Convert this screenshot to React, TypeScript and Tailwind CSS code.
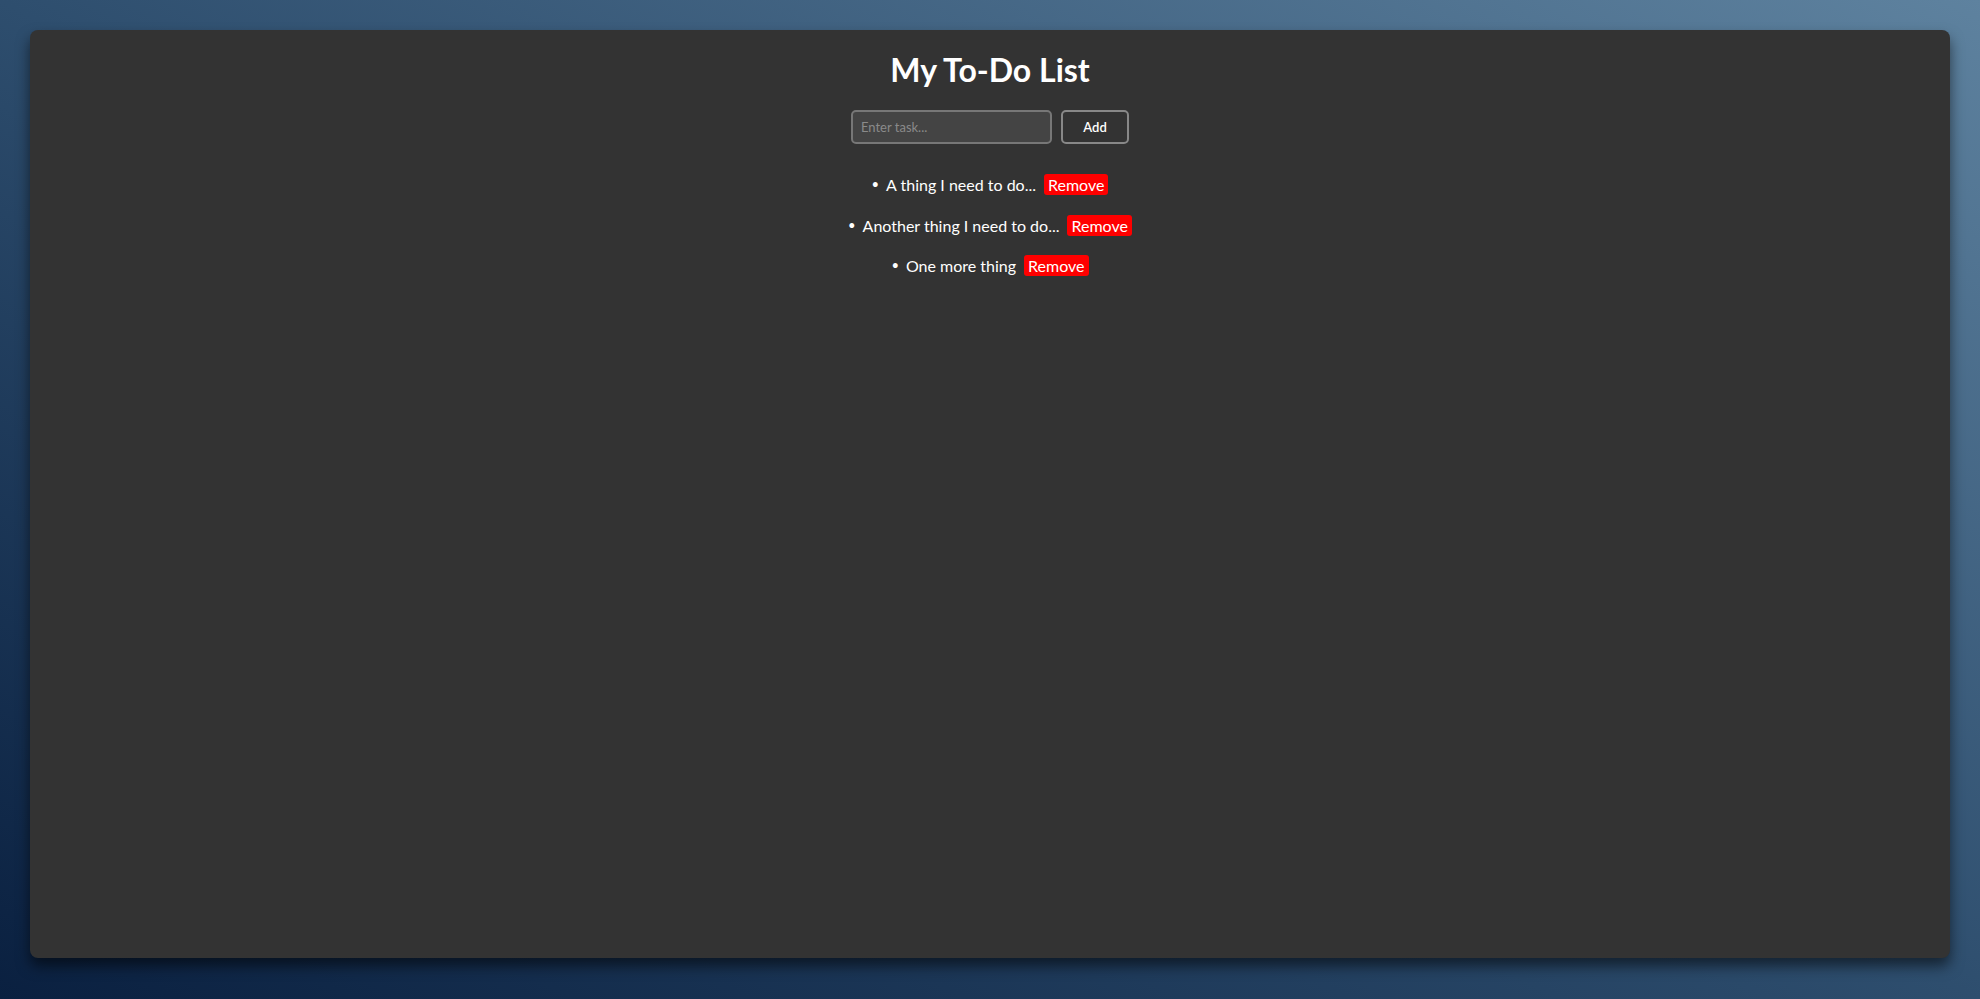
import { useState } from 'react'

const initialTasks = ['A thing I need to do...', 'Another thing I need to do...', 'One more thing']

export default function App() {
  const [tasks, setTasks] = useState(initialTasks)
  const [text, setText] = useState('')

  const add = () => {
    if (!text.trim()) return
    setTasks([...tasks, text.trim()])
    setText('')
  }

  return (
    <div className="min-h-[999px] w-full bg-linear-to-tr from-[#0a2040] via-[#2e4e6e] to-[#5e829f] p-[30px] pb-[41px] font-['Lato','Noto_Sans',sans-serif]">
      <div className="h-[928px] rounded-lg bg-[#333333] shadow-[0_8px_14px_rgba(0,0,0,0.55)] pt-[21px] flex flex-col items-center text-white">
        <h1 className="text-[32px] font-bold leading-[1.2] m-0">My To-Do List</h1>

        <div className="mt-[21px] flex gap-[9px]">
          <input
            value={text}
            onChange={(e) => setText(e.target.value)}
            placeholder="Enter task..."
            className="w-[201px] h-[34px] rounded-[5px] border-2 border-[#777] bg-[#444444] px-[8px] text-[13px] text-white placeholder:text-[#8a8a8a] outline-none"
          />
          <button
            onClick={add}
            className="w-[68px] h-[34px] rounded-[5px] border-2 border-[#888] bg-transparent text-[13px] font-semibold text-white"
          >
            Add
          </button>
        </div>

        <ul className="mt-[30px] flex flex-col items-center gap-[19.5px] text-[16px]">
          {tasks.map((t, i) => (
            <li key={i} className="flex items-center leading-[21px]">
              <span className="mr-[7px] text-[13px]">•</span>
              {t}
              <button
                onClick={() => setTasks(tasks.filter((_, j) => j !== i))}
                className="ml-[8px] rounded-[3px] bg-[#ff0000] px-[4px] text-[16px] leading-[21px] text-white"
              >
                Remove
              </button>
            </li>
          ))}
        </ul>
      </div>
    </div>
  )
}
